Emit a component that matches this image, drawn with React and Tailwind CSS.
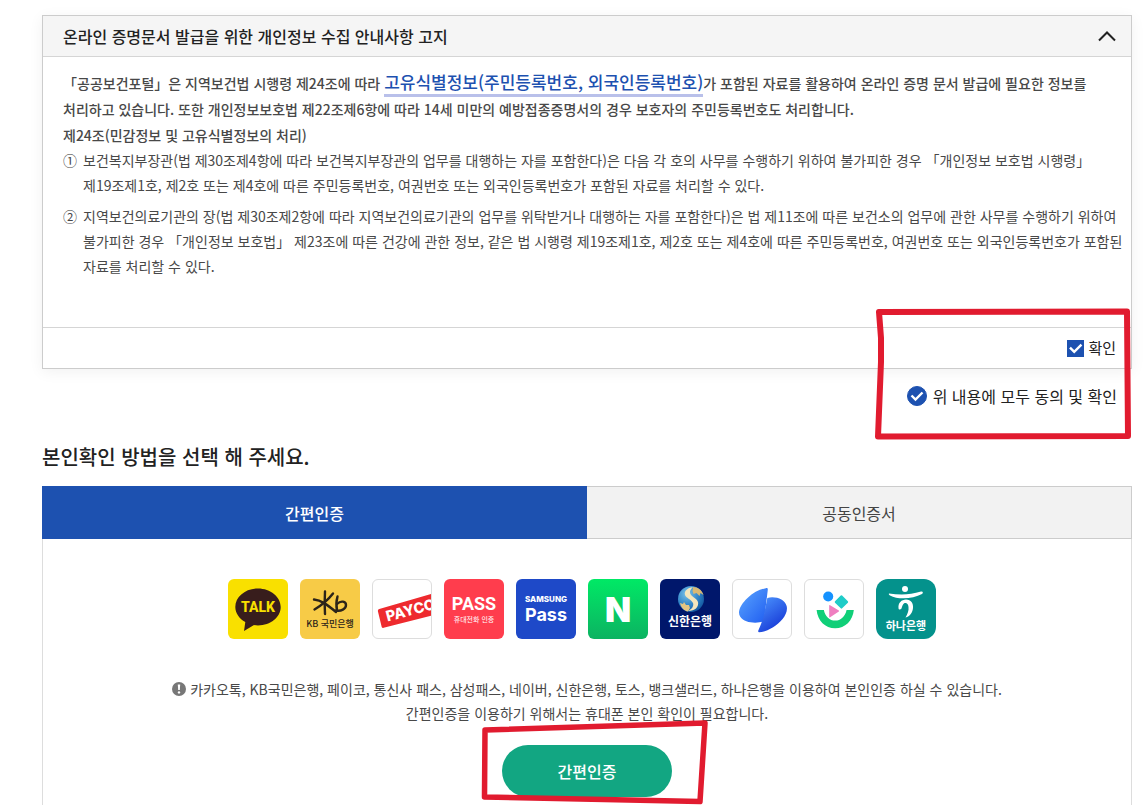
import React, { useState } from "react";

const KO = "Noto Sans CJK JP, Noto Sans CJK SC, sans-serif";

const CheckBox = ({ label, round, checked, onChange }) => (
  <label className={`flex items-center cursor-pointer text-[#222] ${round ? "gap-[6px] text-base" : "gap-1 text-[15px]"}`}>
    <span className="relative flex">
      <input
        type="checkbox"
        checked={checked}
        onChange={onChange}
        className={`peer appearance-none border border-[#1d51b0] bg-white checked:bg-[#1d51b0] ${
          round ? "size-5 rounded-full" : "size-[17px]"
        }`}
      />
      <svg
        viewBox="0 0 20 20"
        className="absolute inset-0 size-full pointer-events-none opacity-0 peer-checked:opacity-100"
        fill="none"
        stroke="#fff"
        strokeWidth={round ? 2.4 : 2.8}
      >
        <path d={round ? "M4.5 9.5l4 4 7-7" : "M3.5 9l5 5 8.5-8.5"} />
      </svg>
    </span>
    {label}
  </label>
);

const providers = [
  {
    name: "카카오톡",
    box: "bg-[#f9e000]",
    art: (
      <>
        <path
          d="M30 9.500C17.500 9.500 7.300 17.800 7.300 28c0 6.200 4 11.700 10 15L16 52l10-6c1.300.200 2.600.400 4 .400 12.500 0 22.700-8.200 22.700-18.400S42.500 9.500 30 9.500z"
          fill="#381d1c"
        />
        <text x="30" y="33" textAnchor="middle" fontFamily="Roboto" fontWeight="800" fontSize="14" fill="#f9e000">
          TALK
        </text>
      </>
    ),
  },
  {
    name: "KB국민은행",
    box: "bg-[#f7cb47]",
    art: (
      <>
        <g fill="none" stroke="#2c2419" strokeWidth="2.400" strokeLinecap="round" strokeLinejoin="round">
          <path d="M25 12.500c-.500 8-.500 14 0 22.500" />
          <path d="M33 14.500C28 21 22 26 14.500 30.500" />
          <path d="M14 20.500c7 .500 13 5 22 12.500" />
          <path d="M37.500 17.500c-1.500 5-1.500 9-.500 14" />
          <path d="M37 25c4-4 9-2.500 9 1 0 4-5 6.500-10 5.500" />
        </g>
        <text x="30" y="48" textAnchor="middle" fontFamily={KO} fontWeight="500" fontSize="9" fill="#2c2419">
          KB 국민은행
        </text>
      </>
    ),
  },
  {
    name: "페이코",
    box: "bg-white border border-[#ddd]",
    art: (
      <>
        <path d="M6.500 30L60 14.500V37L11 49.500q-1.500.300-2-1L5 32q-.300-1.500 1.500-2z" fill="#ee2a2e" />
        <text x="15" y="43" transform="rotate(-15 15 43)" fontFamily="Inter" fontWeight="800" fontSize="15" fill="#fff">
          PAYCO
        </text>
      </>
    ),
  },
  {
    name: "통신사 패스",
    box: "bg-[#ff3d4d]",
    art: (
      <g textAnchor="middle" fill="#fff">
        <text x="30" y="31" fontFamily="Roboto" fontWeight="700" fontSize="18">
          PASS
        </text>
        <text x="30" y="43" fontFamily={KO} fontSize="7">
          휴대전화 인증
        </text>
      </g>
    ),
  },
  {
    name: "삼성패스",
    box: "bg-[#1e49c8]",
    art: (
      <g textAnchor="middle" fill="#fff" fontFamily="Inter">
        <text x="30" y="23" fontWeight="800" fontSize="8">
          SAMSUNG
        </text>
        <text x="30" y="42" fontWeight="700" fontSize="18">
          Pass
        </text>
      </g>
    ),
  },
  {
    name: "네이버",
    box: "bg-gradient-to-b from-[#00e965] to-[#0bb361]",
    art: (
      <text x="30" y="43" textAnchor="middle" fontFamily="Inter" fontWeight="900" fontSize="34" fill="#fff">
        N
      </text>
    ),
  },
  {
    name: "신한은행",
    box: "bg-[#00176b]",
    art: (
      <>
        <defs>
          <radialGradient id="globe" cx="0.350" cy="0.300" r="0.800">
            <stop offset="0" stopColor="#7cc4ea" />
            <stop offset="0.600" stopColor="#2b7fc4" />
            <stop offset="1" stopColor="#0f4f98" />
          </radialGradient>
        </defs>
        <circle cx="31" cy="20" r="13" fill="url(#globe)" />
        <path
          d="M33 8c-6 1-9 4-8 8 1 3 6 4 8 8 1 3-1 6-5 8 7 0 11-4 10-9-1-4-7-5-8-9-.500-2 1-4 3-6z"
          fill="#f4e6bd"
        />
        <path d="M33 8c5 0 9 3 10.500 8l-3-2-1 3-3-3-3 1-1-3z" fill="#d9b873" />
        <path d="M20 24l3 1 1-2 2 3 3 0 1 3 -2 3.500c-4-.500-7-4-8-8.500z" fill="#e3c583" />
        <text x="30" y="47" textAnchor="middle" fontFamily={KO} fontWeight="700" fontSize="12" fill="#fff">
          신한은행
        </text>
      </>
    ),
  },
  {
    name: "토스",
    box: "bg-white border border-[#ddd]",
    art: (
      <>
        <defs>
          <linearGradient id="tossA" x1="0" y1="0" x2="1" y2="1">
            <stop offset="0" stopColor="#5ba6ff" />
            <stop offset="1" stopColor="#1f5cf0" />
          </linearGradient>
          <linearGradient id="tossB" x1="0" y1="0" x2="0.600" y2="1">
            <stop offset="0" stopColor="#4d97ff" />
            <stop offset="1" stopColor="#1638d6" />
          </linearGradient>
        </defs>
        <path
          d="M34 8.500c1.500-.500 2 0 2 1.500L32 43c-10 2.500-20 1-24.500-5C4 33 8 25 15 18.500 21 13 28 9.500 34 8.500z"
          fill="url(#tossA)"
        />
        <path
          d="M35.500 18.500c9-2 18 1.500 20 8.500 2 8-6 17-14 22-5 3-10 5-14.500 5-1 0-1.200-1-.700-2 2.700-6 4.700-11 5.700-16z"
          fill="url(#tossB)"
        />
      </>
    ),
  },
  {
    name: "뱅크샐러드",
    box: "bg-white border border-[#ddd]",
    art: (
      <>
        <path d="M12 31h7.500c1.500 7 6 11 11.700 11S41.500 38 43 31h7.500c-1 11-9 19-19.300 19S13 42 12 31z" fill="#10cf78" />
        <circle cx="24" cy="17" r="5.200" fill="#1592ff" />
        <rect x="32.500" y="17.500" width="10.400" height="10.400" rx="1" transform="rotate(45 37.700 22.700)" fill="#1fccc8" />
        <path d="M25 26.500v11.500q0 1 1 .500l9-6q.800-.500 0-1l-9-5.500q-1-.500-1 .500z" fill="#ef7fc0" />
      </>
    ),
  },
  {
    name: "하나은행",
    box: "bg-[#04928c]",
    rounded: "rounded-xl",
    art: (
      <>
        <g fill="#fff">
          <circle cx="29" cy="10" r="3" />
          <path d="M13 14.500c11 1.500 21 1.500 32-2 2-.500 2.500 1.500 1 2.500-9 5-24 6-32 1.500-1-.600-1.500-1.200-1-2z" />
          <path d="M22.500 29c-.500-5 3-8.500 7.500-8.500 5 0 7.500 4 7 8.500-.500 4.500-3 8.500-7.500 9.500 2-3.500 3.500-7 3-10.500-.300-3-1.500-4-3-4-2.500 0-3 2.500-4 5.500-1 1.500-3 1.500-3-.500z" />
        </g>
        <text x="30" y="51" textAnchor="middle" fontFamily={KO} fontWeight="700" fontSize="11" fill="#fff">
          하나은행
        </text>
      </>
    ),
  },
];

const ProviderIcon = ({ name, box, rounded, art }) => (
  <button type="button" aria-label={name} className={`size-[60px] overflow-hidden ${rounded || "rounded-md"} ${box}`}>
    <svg viewBox="0 0 60 60" className="size-full" aria-hidden="true">
      {art}
    </svg>
  </button>
);

const Notice = () => {
  const [confirmed, setConfirmed] = useState(true);

  return (
    <section className="border border-[#ccc] shadow-[0_3px_14px_rgba(0,0,0,0.06)]">
      <header className="flex items-center justify-between h-[41px] pl-5 pr-[15px] bg-[#f5f5f5] border-b border-[#d5d5d5]">
        <h2 className="text-base font-medium text-[#222]">온라인 증명문서 발급을 위한 개인정보 수집 안내사항 고지</h2>
        <button type="button" aria-label="접기">
          <svg viewBox="0 0 18 12" className="w-[18px] h-3" fill="none" stroke="#222" strokeWidth="2">
            <path d="M1 10.500l8-8 8 8" />
          </svg>
        </button>
      </header>
      <div className="pl-5 pt-3 pb-12 text-sm leading-[25px] text-[#484848]">
        <p className="leading-[26px] font-medium">
          「공공보건포털」은 지역보건법 시행령 제24조에 따라{" "}
          <a href="#law" className="border-b-3 border-[#b9c0ea] text-[17px] text-[#1d51b0]">
            고유식별정보(주민등록번호, 외국인등록번호)
          </a>
          가 포함된 자료를 활용하여 온라인 증명 문서 발급에 필요한 정보를
          <br />
          처리하고 있습니다. 또한 개인정보보호법 제22조제6항에 따라 14세 미만의 예방접종증명서의 경우 보호자의
          주민등록번호도 처리합니다.
          <br />
          제24조(민감정보 및 고유식별정보의 처리)
        </p>
        <ol className="flex flex-col gap-[6px]">
          <li className="flex gap-[6px]">
            <span>①</span>
            <span>
              보건복지부장관(법 제30조제4항에 따라 보건복지부장관의 업무를 대행하는 자를 포함한다)은 다음 각 호의 사무를
              수행하기 위하여 불가피한 경우 「개인정보 보호법 시행령」
              <br />
              제19조제1호, 제2호 또는 제4호에 따른 주민등록번호, 여권번호 또는 외국인등록번호가 포함된 자료를 처리할 수
              있다.
            </span>
          </li>
          <li className="flex gap-[6px]">
            <span>②</span>
            <span>
              지역보건의료기관의 장(법 제30조제2항에 따라 지역보건의료기관의 업무를 위탁받거나 대행하는 자를 포함한다)은 법
              제11조에 따른 보건소의 업무에 관한 사무를 수행하기 위하여
              <br />
              불가피한 경우 「개인정보 보호법」 제23조에 따른 건강에 관한 정보, 같은 법 시행령 제19조제1호, 제2호 또는
              제4호에 따른 주민등록번호, 여권번호 또는 외국인등록번호가 포함된
              <br />
              자료를 처리할 수 있다.
            </span>
          </li>
        </ol>
      </div>
      <footer className="flex items-center justify-end h-[41px] pr-[15px] border-t border-[#d5d5d5]">
        <CheckBox label="확인" checked={confirmed} onChange={() => setConfirmed(!confirmed)} />
      </footer>
    </section>
  );
};

const App = () => {
  const [agreed, setAgreed] = useState(true);

  return (
    <main
      className="relative pl-[42px] pr-[14px] pt-[15px] bg-white font-['Noto_Sans_CJK_JP','Noto_Sans_CJK_SC',sans-serif]"
      lang="ko"
    >
      <Notice />
      <div className="flex justify-end pr-[15px] pt-[15px]">
        <CheckBox round label="위 내용에 모두 동의 및 확인" checked={agreed} onChange={() => setAgreed(!agreed)} />
      </div>

      <h2 className="mt-[33px] mb-[13px] text-xl leading-[32px] font-medium text-[#222]">
        본인확인 방법을 선택 해 주세요.
      </h2>
      <div role="tablist" className="grid grid-cols-2 h-[53px]">
        <button type="button" role="tab" aria-selected="true" className="bg-[#1d51b0] text-base font-medium text-white">
          간편인증
        </button>
        <button
          type="button"
          role="tab"
          aria-selected="false"
          className="bg-[#f2f2f2] border border-l-0 border-[#ccc] text-base text-[#444]"
        >
          공동인증서
        </button>
      </div>

      <div className="flex flex-col items-center border-x border-[#ddd] pt-10 pb-2">
        <div className="flex gap-3 pr-[10px]">
          {providers.map((item) => (
            <ProviderIcon key={item.name} {...item} />
          ))}
        </div>
        <div className="mt-[38px] text-center text-sm leading-[24px] text-[#484848]">
          <p className="flex items-center justify-center gap-1">
            <svg viewBox="0 0 14 14" className="size-[14px]" aria-hidden="true">
              <circle cx="7" cy="7" r="7" fill="#777" />
              <path d="M5.800 2.500h2.400L7.800 8H6.200z" fill="#fff" />
              <circle cx="7" cy="10.400" r="1.200" fill="#fff" />
            </svg>
            카카오톡, KB국민은행, 페이코, 통신사 패스, 삼성패스, 네이버, 신한은행, 토스, 뱅크샐러드, 하나은행을 이용하여
            본인인증 하실 수 있습니다.
          </p>
          <p>간편인증을 이용하기 위해서는 휴대폰 본인 확인이 필요합니다.</p>
        </div>
        <div className="relative mt-5">
          <button type="button" className="block w-[170px] h-[52px] rounded-full bg-[#12a682] text-base font-medium text-white">
            간편인증
          </button>
          <svg
            viewBox="0 0 228 86"
            className="absolute -left-[21px] -top-[26px] w-[228px] h-[86px] max-w-none pointer-events-none"
            aria-hidden="true"
          >
            <path d="M4 11L224 4 219 82.500 3.500 78z" fill="none" stroke="#e11b2f" strokeWidth="5.500" strokeLinejoin="round" />
          </svg>
        </div>
      </div>

      {/* hand-drawn marker around the two consent boxes */}
      <svg
        viewBox="0 0 256 132"
        className="absolute right-[15px] top-[308px] w-[256px] h-[132px] pointer-events-none"
        aria-hidden="true"
      >
        <path
          d="M4 4L252 3.500 253 128 3 128.500 6 54 6 30z"
          fill="none"
          stroke="#e11b2f"
          strokeWidth="6"
          strokeLinejoin="round"
        />
      </svg>
    </main>
  );
};

export default App;
